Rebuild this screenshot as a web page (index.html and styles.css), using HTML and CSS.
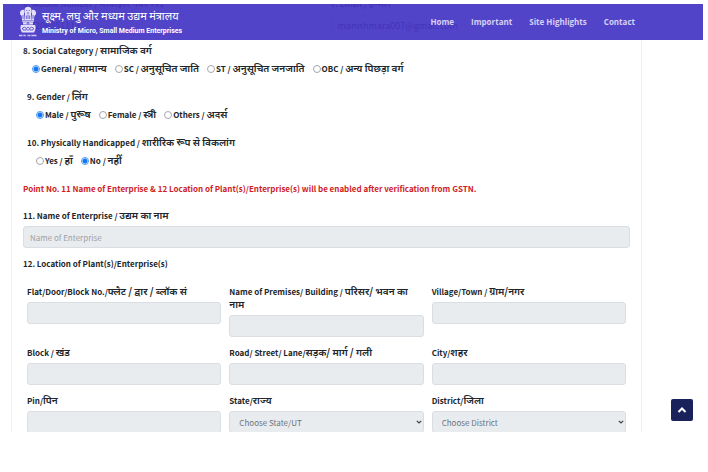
FILE: index.html
```html
<!DOCTYPE html>
<html lang="en">
<head>
<meta charset="utf-8">
<title>Ministry of Micro, Small Medium Enterprises</title>
<link rel="stylesheet" href="styles.css">
</head>
<body>
<div class="screen">
  <header class="topbar">
    <a class="brand" href="#">
      <svg class="emblem" viewBox="0 0 20 32" aria-hidden="true">
        <g fill="#e4e0fa">
          <path d="M6.500 4Q7 .8 10 .8T13.500 4Q14 5.500 13 7.500L13.500 14h-7L7 7.500Q6 5.500 6.500 4z"/>
          <path d="M2 6.500Q2.500 3.500 5.800 3.800L6.300 6 6 8l.3 6H4L3.700 10Q1.500 8.500 2 6.500zM18 6.500Q17.500 3.500 14.200 3.800L13.700 6 14 8l-.3 6H16L16.300 10Q18.500 8.500 18 6.500z"/>
          <path d="M4 14.500h12v1.200H4zM5 16.200h10v2.300H5z"/>
          <path d="M3 19h14q1.500 3.500-1 7.500H4Q1.500 22.500 3 19z"/>
        </g>
        <g stroke="#5143c9" stroke-width=".8" fill="none">
          <circle cx="10" cy="17.300" r=".9"/>
          <path d="M8.300 4.500h1M10.800 4.500h1M8.800 7h2.400M8.300 9.500v3.500M10 8.500v4.500M11.700 9.500v3.500M5 9v4M15 9v4"/>
          <path d="M4.500 22q1.800-1.600 3.800 0v2H5zM11.700 22q2-1.600 3.800 0l-.5 2h-3.300zM9 21.500h2M9 24h2"/>
        </g>
        <path d="M1 29.600h3.500M5.300 29.600h2.500M9.500 29.600h3M13.300 29.600h5.200" stroke="#c9c3f2" stroke-width="1.500"/>
      </svg>
      <span class="brand-text">
        <span class="brand-hi" lang="hi">सूक्ष्म, लघु और मध्यम उद्यम मंत्रालय</span>
        <span class="brand-en">Ministry of Micro, Small Medium Enterprises</span>
      </span>
    </a>
    <nav class="nav">
      <a href="#">Home</a>
      <a href="#">Important</a>
      <a href="#">Site Highlights</a>
      <a href="#">Contact</a>
    </nav>
  </header>

  <form class="card">
    <div class="pair">
      <div class="field">
        <label for="mobile">6. Mobile Number / <span lang="hi">मोबाइल नंबर</span> +91</label>
        <input id="mobile" class="control editable" type="text" value="7206951113">
      </div>
      <div class="field">
        <label for="email">7. Email / <span lang="hi">ई-मेल</span></label>
        <input id="email" class="control editable" type="text" value="manishmara007@gmail.com">
      </div>
    </div>

    <fieldset class="group">
      <legend>8. Social Category / <span lang="hi">सामाजिक वर्ग</span></legend>
      <div class="options">
        <label><input type="radio" name="category" checked><span>General / <span lang="hi">सामान्य</span></span></label>
        <label><input type="radio" name="category"><span>SC / <span lang="hi">अनुसूचित जाति</span></span></label>
        <label><input type="radio" name="category"><span>ST / <span lang="hi">अनुसूचित जनजाति</span></span></label>
        <label><input type="radio" name="category"><span>OBC / <span lang="hi">अन्य पिछड़ा वर्ग</span></span></label>
      </div>
    </fieldset>
    <fieldset class="group inset">
      <legend>9. Gender / <span lang="hi">लिंग</span></legend>
      <div class="options">
        <label><input type="radio" name="gender" checked><span>Male / <span lang="hi">पुरूष</span></span></label>
        <label><input type="radio" name="gender"><span>Female / <span lang="hi">स्त्री</span></span></label>
        <label><input type="radio" name="gender"><span>Others / <span lang="hi">अदर्स</span></span></label>
      </div>
    </fieldset>
    <fieldset class="group inset">
      <legend>10. Physically Handicapped / <span lang="hi">शारीरिक रूप से विकलांग</span></legend>
      <div class="options">
        <label><input type="radio" name="handicapped"><span>Yes / <span lang="hi">हाँ</span></span></label>
        <label><input type="radio" name="handicapped" checked><span>No / <span lang="hi">नहीं</span></span></label>
      </div>
    </fieldset>

    <p class="notice">Point No. 11 Name of Enterprise &amp; 12 Location of Plant(s)/Enterprise(s) will be enabled after verification from GSTN.</p>

    <div class="field">
      <label for="enterprise">11. Name of Enterprise / <span lang="hi">उद्यम का नाम</span></label>
      <input id="enterprise" class="control" type="text" placeholder="Name of Enterprise" disabled>
    </div>

    <h2 class="heading">12. Location of Plant(s)/Enterprise(s)</h2>

    <div class="location">
      <div class="field">
        <label for="flat">Flat/Door/Block No./<span lang="hi">फ्लैट / द्वार / ब्लॉक सं</span></label>
        <input id="flat" class="control" type="text" disabled>
      </div>
      <div class="field">
        <label for="premises">Name of Premises/ Building / <span lang="hi">परिसर/ भवन का नाम</span></label>
        <input id="premises" class="control" type="text" disabled>
      </div>
      <div class="field">
        <label for="village">Village/Town / <span lang="hi">ग्राम/नगर</span></label>
        <input id="village" class="control" type="text" disabled>
      </div>
      <div class="field">
        <label for="block">Block / <span lang="hi">खंड</span></label>
        <input id="block" class="control" type="text" disabled>
      </div>
      <div class="field">
        <label for="road">Road/ Street/ Lane/<span lang="hi">सड़क/ मार्ग / गली</span></label>
        <input id="road" class="control" type="text" disabled>
      </div>
      <div class="field">
        <label for="city">City/<span lang="hi">शहर</span></label>
        <input id="city" class="control" type="text" disabled>
      </div>
      <div class="field">
        <label for="pin">Pin/<span lang="hi">पिन</span></label>
        <input id="pin" class="control" type="text" disabled>
      </div>
      <div class="field">
        <label for="state">State/<span lang="hi">राज्य</span></label>
        <div class="select">
          <select id="state" class="control" disabled><option>Choose State/UT</option></select>
          <svg viewBox="0 0 6 4" aria-hidden="true"><path d="M.8.8 3 3 5.200.8"/></svg>
        </div>
      </div>
      <div class="field">
        <label for="district">District/<span lang="hi">जिला</span></label>
        <div class="select">
          <select id="district" class="control" disabled><option>Choose District</option></select>
          <svg viewBox="0 0 6 4" aria-hidden="true"><path d="M.8.8 3 3 5.200.8"/></svg>
        </div>
      </div>
    </div>
  </form>

  <button class="to-top" type="button" aria-label="Back to top">
    <svg viewBox="0 0 10 8" aria-hidden="true"><path d="M1.500 6 5 2.500 8.500 6"/></svg>
  </button>
</div>
</body>
</html>
```
FILE: styles.css
```css
* {
  box-sizing: border-box;
}

body {
  margin: 0;
  padding: 4px 5px 40px 3px;
  height: 100vh;
  background: #fff;
  color: #212529;
  font: 8px/13px "Noto Sans CJK JP", "Noto Sans", sans-serif;
}

.screen {
  position: relative;
  height: 100%;
  overflow: hidden;
}

.topbar {
  position: absolute;
  inset: 0 0 auto 0;
  z-index: 1;
  display: flex;
  align-items: center;
  justify-content: space-between;
  height: 36px;
  padding: 0 68px 0 15px;
  background: rgba(67, 52, 195, 0.92);
}

.brand {
  display: flex;
  align-items: center;
  gap: 4px;
  color: #fff;
  text-decoration: none;
}

.emblem {
  width: 20px;
  height: 32px;
}

.brand-text {
  display: flex;
  flex-direction: column;
  white-space: nowrap;
}

.brand-hi {
  font-size: 11px;
  line-height: 18px;
}

.brand-en {
  font: bold 7px/14px Roboto, "Liberation Sans", sans-serif;
}

.nav {
  display: flex;
  gap: 17px;
  white-space: nowrap;
}

.nav a {
  color: #d5d0f5;
  font-family: "Open Sans", sans-serif;
  font-weight: 700;
  line-height: 16px;
  text-decoration: none;
}

.card {
  margin: -8px 61px 0 8px;
  padding: 0 11px 12px;
  border: 1px solid #eeeff2;
}

.pair {
  display: grid;
  grid-template-columns: 1fr 1fr;
  gap: 8px;
  margin-bottom: 8px;
}

.field label,
.options label,
legend,
.heading,
.notice {
  font-size: 8px;
  font-weight: 700;
}

.card [lang="hi"] {
  font-size: 10px;
  font-weight: 600;
  line-height: 10px;
}

.field label {
  display: block;
  margin-bottom: 4px;
}

.control {
  display: block;
  width: 100%;
  height: 22px;
  padding: 0 6px;
  border: 1px solid #dadee3;
  border-radius: 3px;
  background: #e9ecef;
  color: #6c7279;
  font: inherit;
  opacity: 1;
}

.control::placeholder {
  color: #9ba1a8;
}

.editable {
  background: #fff;
  color: #212529;
  font-size: 9px;
}

.group {
  margin: 0 0 15px;
  padding: 0;
  border: 0;
}

.inset {
  padding-left: 4px;
}

legend {
  padding: 0;
}

.options {
  display: flex;
  gap: 8px;
  margin-top: 5px;
  padding-left: 9px;
  white-space: nowrap;
}

.options label {
  display: flex;
  align-items: center;
  gap: 1px;
}

.options input {
  appearance: none;
  width: 8px;
  height: 8px;
  margin: 0;
  border: 1px solid #a3a7ab;
  border-radius: 50%;
  background: #fff;
}

.options input:checked {
  border-color: #4a97f5;
  background: radial-gradient(circle, #1477f2 2px, #fff 3px);
}

.notice {
  margin: 0 0 14px;
  color: #d0211f;
}

.heading {
  margin: 9px 0 15px;
}

.location {
  display: grid;
  grid-template-columns: repeat(3, 1fr);
  gap: 9px 8px;
  padding: 0 4px;
}

.select {
  position: relative;
}

.select .control {
  appearance: none;
  padding-left: 9px;
}

.select svg {
  position: absolute;
  top: 9px;
  right: 2px;
  width: 6px;
  height: 4px;
  fill: none;
  stroke: #3d4248;
  stroke-width: 1.2;
}

.to-top {
  position: absolute;
  right: 10px;
  bottom: 11px;
  z-index: 1;
  display: grid;
  place-items: center;
  width: 22px;
  height: 22px;
  padding: 0;
  border: 0;
  border-radius: 2px;
  background: #19225a;
}

.to-top svg {
  width: 10px;
  height: 8px;
  fill: none;
  stroke: #fff;
  stroke-width: 2;
}
```
